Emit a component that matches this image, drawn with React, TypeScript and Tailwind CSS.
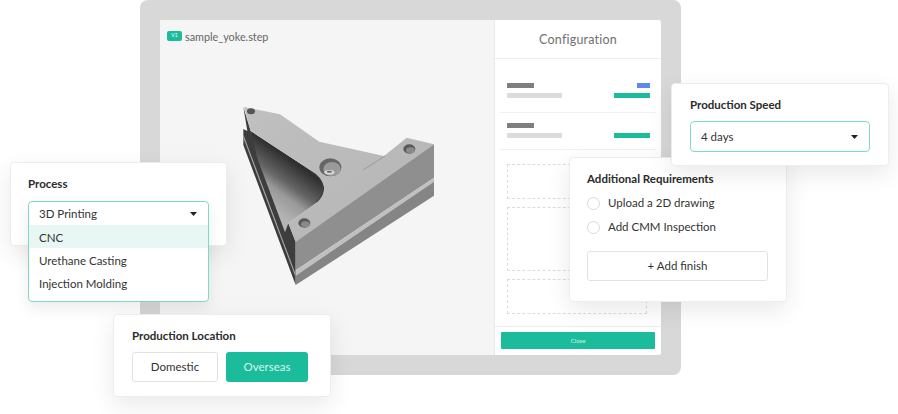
const font = { fontFamily: '"Lato", "Noto Sans", sans-serif' };

function Caret() {
  return (
    <svg width="7" height="4" viewBox="0 0 7 4" className="mr-[1px] shrink-0">
      <path d="M0 0H7L3.5 4Z" fill="#222" />
    </svg>
  );
}

function Part() {
  return (
    <svg width="220" height="200" viewBox="0 0 660 600" className="shrink-0">
      <defs>
        <linearGradient id="pocket" gradientUnits="userSpaceOnUse" x1="62" y1="108" x2="-32" y2="238">
          <stop offset="0" stopColor="#2f2f2f" />
          <stop offset="0.4" stopColor="#666666" />
          <stop offset="0.61" stopColor="#999999" />
          <stop offset="0.96" stopColor="#b4b4b4" />
        </linearGradient>
        <linearGradient id="top" x1="0" y1="0" x2="1" y2="1">
          <stop offset="0" stopColor="#c0c0c0" />
          <stop offset="1" stopColor="#b4b4b4" />
        </linearGradient>
      </defs>
      <path d="M40 36L62 108L175 385L197 440V570L40 150V102L52 108Z" fill="#3d3d3d" />
      <path d="M40 118L195 532V542L40 128Z" fill="#a4a4a4" />
      <path d="M62 108L245 228Q275 245 282 275Q285 300 262 322L175 385L165 412L82 190Z" fill="url(#pocket)" />
      <path d="M245 228Q275 245 282 275Q285 300 262 322" fill="none" stroke="#3f3f3f" strokeWidth="10" opacity="0.6" />
      <path d="M42 36L150 58L268 140L462 183L530 128L612 148L197 440L175 385L262 322Q285 300 282 275Q275 245 245 228L62 108Z" fill="url(#top)" />
      <path d="M197 440L612 148V248L197 526Z" fill="#8f8f8f" />
      <path d="M197 526L612 248V260L197 542Z" fill="#c0c0c0" />
      <path d="M197 542L612 260V302L197 570Z" fill="#858585" />
      <path d="M400 225L465 183" stroke="#8a8a8a" strokeWidth="2" />
      <ellipse cx="63" cy="49" rx="12" ry="9" fill="#555" />
      <ellipse cx="538" cy="162" rx="18" ry="14" fill="#5a5a5a" />
      <ellipse cx="541" cy="166" rx="13" ry="9" fill="#8a8a8a" />
      <ellipse cx="223" cy="384" rx="18" ry="14" fill="#5a5a5a" />
      <ellipse cx="226" cy="388" rx="13" ry="9" fill="#8a8a8a" />
      <ellipse cx="301" cy="217" rx="33" ry="27" fill="#666" />
      <ellipse cx="306" cy="222" rx="26" ry="21" fill="#9a9a9a" />
      <ellipse cx="298" cy="232" rx="15" ry="7" fill="#d8d8d8" />
      <ellipse cx="298" cy="230" rx="8" ry="3" fill="#666" />
    </svg>
  );
}

function Row({ blue, className }: { blue?: boolean; className: string }) {
  return (
    <div className={`ml-[5px] mr-[5px] flex justify-between border-b border-[#f1f1f1] pl-[7px] pr-[6px] ${className}`}>
      <div className="flex flex-col gap-[5px]">
        <div className="h-[5px] w-[27px] bg-[#7f7f7f]" />
        <div className="h-[5px] w-[55px] bg-[#dcdcdc]" />
      </div>
      <div className="flex flex-col items-end gap-[5px]">
        <div className={`h-[5px] w-[13px] ${blue ? "bg-[#5f88ee]" : ""}`} />
        <div className="h-[5px] w-[36px] bg-[#1abc9c]" />
      </div>
    </div>
  );
}

function Card({ className, children }: { className: string; children: React.ReactNode }) {
  return (
    <div className={`absolute rounded-[4px] border border-[#ededed] bg-white shadow-[0_8px_24px_rgba(0,0,0,0.09)] ${className}`}>
      {children}
    </div>
  );
}

function Radio({ label }: { label: string }) {
  return (
    <div className="flex h-[24px] items-center gap-[8px]">
      <div className="size-[13px] rounded-full border border-[#d9d9d9]" />
      <span>{label}</span>
    </div>
  );
}

export default function App() {
  return (
    <div style={font} className="relative h-[414px] w-[898px] overflow-hidden bg-white text-[11.5px] text-[#333]">
      <div className="ml-[140px] h-[375px] w-[541px] rounded-[8px] bg-[#d8d8d8] p-[20px]">
        <div className="flex h-[335px] w-[501px] overflow-hidden rounded-[2px] bg-white">
          <div className="w-[334px] shrink-0 bg-[#f5f5f5] pl-[70px] pt-[75px]">
            <div className="absolute left-[167px] top-[28px] flex items-center gap-[3px]">
              <div className="flex h-[10px] w-[15px] items-center justify-center rounded-[2px] bg-[#1abc9c] text-[5px] text-white">V1</div>
              <span className="relative top-[1px] text-[10.8px] text-[#666]">sample_yoke.step</span>
            </div>
            <Part />
          </div>
          <div className="flex min-w-0 flex-1 flex-col border-l border-[#e8e8e8]">
            <div className="flex h-[39px] shrink-0 items-center justify-center border-b border-[#ececec] pt-[3px] text-[12.5px] tracking-[0.2px] text-[#707070]">
              Configuration
            </div>
            <Row blue className="h-[54px] items-start pt-[24px]" />
            <Row className="h-[37px] items-start pt-[10px]" />
            <div className="flex flex-col gap-[8px] px-[12px] pt-[14px]">
              <div className="h-[35px] w-[140px] border border-dashed border-[#dcdcdc]" />
              <div className="h-[64px] w-[140px] border border-dashed border-[#dcdcdc]" />
              <div className="h-[35px] w-[140px] border border-dashed border-[#dcdcdc]" />
            </div>
            <div className="mt-[12px] flex flex-1 items-start border-t border-[#ececec] px-[6px] pt-[5px]">
              <div className="flex h-[17px] w-full items-center justify-center rounded-[1px] bg-[#1abc9c] text-[6px] text-[#d5f3ed]">Close</div>
            </div>
          </div>
        </div>
      </div>

      <Card className="left-[10px] top-[162px] h-[84px] w-[217px] px-[17px] pt-[13px]">
        <div className="text-[11.5px] font-bold leading-[16px] text-[#2b2b2b]">Process</div>
      </Card>
      <div className="absolute left-[28px] top-[201px] h-[101px] w-[181px] overflow-hidden rounded-[4px] border-[1.5px] border-[#80d9c7] bg-white text-[11.5px] shadow-[0_6px_16px_rgba(0,0,0,0.08)]">
        <div className="flex h-[23px] items-center justify-between px-[10px] pt-[1px]">
          <span>3D Printing</span>
          <Caret />
        </div>
        <div className="flex h-[23px] items-center bg-[#e8f7f4] pl-[10px] pt-[2px]">CNC</div>
        <div className="flex h-[23px] items-center pl-[10px] pt-[2px]">Urethane Casting</div>
        <div className="flex h-[23px] items-center pl-[10px] pt-[2px]">Injection Molding</div>
      </div>

      <Card className="left-[113px] top-[314px] h-[83px] w-[218px] px-[18px] pt-[13px]">
        <div className="text-[11.5px] font-bold leading-[16px] text-[#2b2b2b]">Production Location</div>
        <div className="mt-[8px] flex gap-[8px]">
          <div className="flex h-[30px] w-[86px] items-center justify-center rounded-[3px] border border-[#e2e2e2]">Domestic</div>
          <div className="flex h-[30px] w-[82px] items-center justify-center rounded-[3px] bg-[#1abc9c] text-[#d9f5ef]">Overseas</div>
        </div>
      </Card>

      <Card className="left-[569px] top-[157px] h-[145px] w-[218px] px-[17px] pt-[13px]">
        <div className="text-[11.5px] font-bold leading-[16px] text-[#2b2b2b]">Additional Requirements</div>
        <div className="mt-[4px]">
          <Radio label="Upload a 2D drawing" />
          <Radio label="Add CMM Inspection" />
        </div>
        <div className="mt-[12px] flex h-[30px] w-[181px] items-center justify-center rounded-[3px] border border-[#e2e2e2]">+ Add finish</div>
      </Card>

      <Card className="left-[671px] top-[83px] h-[83px] w-[218px] px-[18px] pt-[13px]">
        <div className="text-[11.5px] font-bold leading-[16px] text-[#2b2b2b]">Production Speed</div>
        <div className="mt-[8px] flex h-[31px] w-[180px] items-center justify-between rounded-[4px] border-[1.5px] border-[#80d9c7] px-[10px]">
          <span>4 days</span>
          <Caret />
        </div>
      </Card>
    </div>
  );
}
